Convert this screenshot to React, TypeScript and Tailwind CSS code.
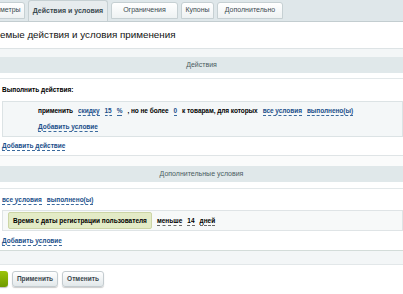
import React from "react";

const font = { fontFamily: '"Liberation Sans", Arial, sans-serif' };

const Link = ({ children, dark }: { children: React.ReactNode; dark?: boolean }) => (
  <span
    className={
      "shrink-0 font-bold border-b border-dashed leading-[9px] " +
      (dark ? "text-black border-[#6a6a6a]" : "text-[#1b4f8a] border-[#3a6a9e]")
    }
  >
    {children}
  </span>
);

const Tab = ({ label, active, className }: { label: string; active?: boolean; className?: string }) => (
  <div
    className={
      "shrink-0 flex items-center border border-[#c6d0d3] rounded-t-[3px] text-[7px] font-bold text-[#3b4a50] " +
      (active
        ? "h-[21px] bg-[#e7ecee] border-b-0 self-end"
        : "h-[17px] bg-gradient-to-b from-white to-[#eef2f3] self-end mb-[2px] font-normal ") +
      " " +
      (className ?? "")
    }
  >
    {label}
  </div>
);

const SectionHeader = ({ title }: { title: string }) => (
  <div className="h-[16px] bg-[#e0e8ea] flex items-center justify-center text-[7px] text-[#4a5c61]">
    {title}
  </div>
);

export default function App() {
  return (
    <div className="w-[403px] h-[294px] overflow-hidden bg-white text-black whitespace-nowrap" style={font}>
      {/* tabs */}
      <div className="h-[22px] bg-[#dfe7ea] flex items-end gap-[3px] border-b border-[#c3cdd0]">
        <Tab label="метры" className="w-[26px] -ml-[1px] pl-0 rounded-tl-none" />
        <Tab label="Действия и условия" active className="w-[80px] justify-center" />
        <Tab label="Ограничения" className="w-[67px] justify-center" />
        <Tab label="Купоны" className="w-[33px] justify-center" />
        <Tab label="Дополнительно" className="w-[66px] justify-center" />
      </div>

      {/* title */}
      <div className="h-[26px] flex items-center text-[9.8px] leading-none text-[#111] pb-[1px]">
        емые действия и условия применения
      </div>

      <div className="h-[9px] border-t border-[#dde3e5] bg-[#f3f6f7]" />
      <SectionHeader title="Действия" />

      <div className="border-t border-[#e3e8ea] mt-[5px] h-[23px] flex items-center pl-[2px] text-[6.5px] font-bold">
        Выполнить действия:
      </div>

      <div className="ml-[2px] h-[36px] bg-[#f4f7f8] border border-[#dce3e5] flex flex-col justify-center gap-[6px] pl-[35px]">
        <div className="flex items-center gap-[5px] text-[6.5px] font-bold tracking-[-0.05px]">
          <span className="shrink-0">применить</span>
          <Link>скидку</Link>
          <Link>15</Link>
          <Link>%</Link>
          <span className="shrink-0">, но не более</span>
          <Link>0</Link>
          <span className="shrink-0">к товарам, для которых</span>
          <Link>все условия</Link>
          <Link>выполнено(ы)</Link>
        </div>
        <div className="flex text-[6.5px]">
          <Link>Добавить условие</Link>
        </div>
      </div>

      <div className="h-[18px] flex items-center pl-[2px] text-[6.5px]">
        <Link>Добавить действие</Link>
      </div>

      <div className="h-[11px] border-t border-[#dfe4e6] bg-[#fafbfb]" />
      <SectionHeader title="Дополнительные условия" />

      <div className="border-t border-[#e3e8ea] mt-[6px] h-[22px] flex items-center gap-[5px] pl-[2px] text-[6.5px]">
        <Link>все условия</Link>
        <Link>выполнено(ы)</Link>
      </div>

      <div className="ml-[2px] h-[21px] bg-[#f7f9f9] border border-[#dfe4e6] flex items-center gap-[5px] pl-[5px] text-[6.5px] font-bold">
        <div className="shrink-0 h-[17px] px-[4px] flex items-center bg-[#e3ebc6] border border-[#ccd5a6] rounded-[2px]">
          Время с даты регистрации пользователя
        </div>
        <Link dark>меньше</Link>
        <Link dark>14</Link>
        <Link dark>дней</Link>
      </div>

      <div className="h-[19px] flex items-center pl-[2px] text-[6.5px]">
        <Link>Добавить условие</Link>
      </div>

      <div className="h-[15px] border-t border-[#d3dcd9] border-b border-b-[#e2e7e9] bg-[#f3f6f7]" />

      {/* buttons */}
      <div className="flex items-center gap-[4px] pt-[6px]">
        <div className="w-[8px] h-[16px] rounded-r-[3px] bg-gradient-to-b from-[#9cc40a] to-[#6f9a00] shadow-[0_1px_1px_rgba(0,0,0,0.25)]" />
        <button className="h-[16px] w-[46px] rounded-[3px] border border-[#c4ccd0] bg-gradient-to-b from-white to-[#e2e8ea] text-[6.5px] font-bold text-[#3a464c] shadow-[0_1px_1px_rgba(0,0,0,0.2)]">
          Применить
        </button>
        <button className="h-[16px] w-[42px] rounded-[3px] border border-[#c4ccd0] bg-gradient-to-b from-white to-[#e2e8ea] text-[6.5px] font-bold text-[#3a464c] shadow-[0_1px_1px_rgba(0,0,0,0.2)]">
          Отменить
        </button>
      </div>
    </div>
  );
}
